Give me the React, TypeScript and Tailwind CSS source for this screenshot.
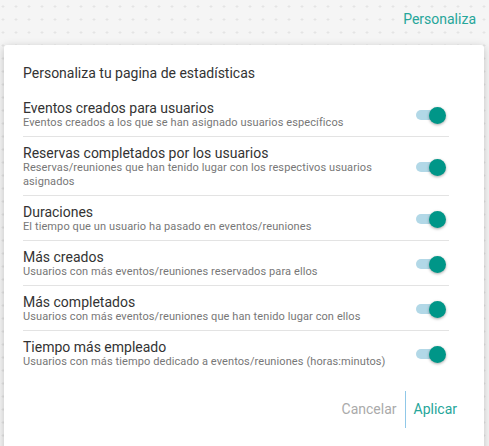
import React from 'react';

interface StatOption {
  title: string;
  description: string;
}

const options: StatOption[] = [
  {
    title: 'Eventos creados para usuarios',
    description: 'Eventos creados a los que se han asignado usuarios específicos',
  },
  {
    title: 'Reservas completados por los usuarios',
    description: 'Reservas/reuniones que han tenido lugar con los respectivos usuarios asignados',
  },
  {
    title: 'Duraciones',
    description: 'El tiempo que un usuario ha pasado en eventos/reuniones',
  },
  {
    title: 'Más creados',
    description: 'Usuarios con más eventos/reuniones reservados para ellos',
  },
  {
    title: 'Más completados',
    description: 'Usuarios con más eventos/reuniones que han tenido lugar con ellos',
  },
  {
    title: 'Tiempo más empleado',
    description: 'Usuarios con más tiempo dedicado a eventos/reuniones (horas:minutos)',
  },
];

const Toggle: React.FC = () => (
  <div className="relative w-[30px] h-[17px] shrink-0 mr-[3px]">
    <div className="absolute left-0 top-[3.5px] w-[26px] h-[10px] rounded-full bg-[#b2d8e7]" />
    <div className="absolute right-0 top-0 w-[17px] h-[17px] rounded-full bg-[#009688] shadow-[0_1px_3px_rgba(0,0,0,0.35)]" />
  </div>
);

const App: React.FC = () => {
  return (
    <div className="w-[489px] h-[446px] overflow-hidden bg-[#f5f5f5] bg-[radial-gradient(circle,#e4e4e4_1px,transparent_1.3px)] bg-[size:13px_13px] bg-[position:-3.5px_0px] font-['Roboto',sans-serif]">
      {/* Top bar */}
      <div className="h-[45px] flex items-center justify-end pr-[13px] pb-[7px]">
        <span className="text-[14px] text-[#26a69a]">Personaliza</span>
      </div>

      {/* Dialog card */}
      <div className="ml-[4px] w-[480px] h-[420px] bg-white rounded-[3px] shadow-[0_2px_8px_rgba(0,0,0,0.22)] pl-[19px] pr-[35px] pt-[18px]">
        <h2 className="text-[14px] leading-[20px] text-[#333333] mb-[9px]">
          Personaliza tu pagina de estadísticas
        </h2>

        <div className="flex flex-col">
          {options.map((opt, i) => (
            <div
              key={opt.title}
              className={`flex items-center justify-between pt-[8px] pb-[6px] ${
                i < options.length - 1 ? 'border-b border-[#e3e3e3]' : ''
              }`}
            >
              <div className="flex flex-col pr-4">
                <p className="text-[14px] leading-[16px] text-[#333333]">{opt.title}</p>
                <p className="text-[11px] leading-[14px] text-[#777777] tracking-[0.1px]">
                  {opt.description}
                </p>
              </div>
              <Toggle />
            </div>
          ))}
        </div>

        {/* Actions */}
        <div className="flex justify-end items-stretch mt-[16px] h-[37px] -mr-[16px]">
          <button className="px-2 text-[14px] text-[#aaaaaa]">Cancelar</button>
          <button className="px-2 text-[14px] text-[#26a69a] border-l border-[#90c8e8]">
            Aplicar
          </button>
        </div>
      </div>
    </div>
  );
};

export default App;
